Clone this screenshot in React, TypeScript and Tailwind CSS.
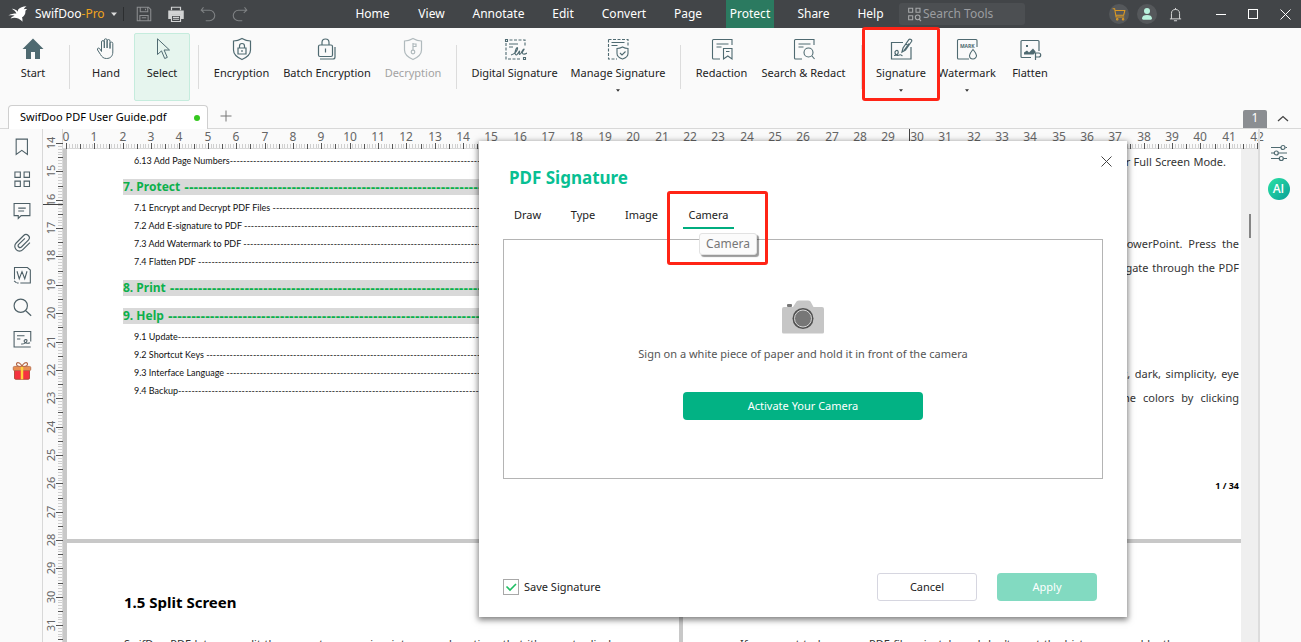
import type { ReactNode } from "react";

const CM = 28.36;

function Icon({ size = 24, className = "", sw = 1, children }: { size?: number; className?: string; sw?: number; children: ReactNode }) {
  return (
    <svg width={size} height={size} viewBox="0 0 24 24" fill="none" stroke="currentColor" strokeWidth={sw} className={"shrink-0 " + className} aria-hidden="true">
      {children}
    </svg>
  );
}

/* ---------- title bar ---------- */

const menus = [
  { name: "Home", w: "w-[43px]" },
  { name: "View", w: "w-[35px]" },
  { name: "Annotate", w: "w-[59px]" },
  { name: "Edit", w: "w-[30px]" },
  { name: "Convert", w: "w-[52px]" },
  { name: "Page", w: "w-[36px]" },
  { name: "Protect", w: "w-[48px]", active: true },
  { name: "Share", w: "w-[39px]" },
  { name: "Help", w: "w-[35px]" },
];

function TitleBar() {
  return (
    <header className="flex h-7 shrink-0 items-center bg-[#424548] text-white">
      <div className="flex w-[351px] shrink-0 items-center pl-2">
        <svg width="20" height="16" viewBox="0 0 20 16" fill="#fff" aria-hidden="true">
          <path d="M18.5 0.3C15 0.6 11.6 1.6 10.2 3.6C9.8 4.3 9.8 5 10.1 5.8C8.4 4 6.6 3 3.8 2.8C6 4 7.6 5.4 8.4 7.4C5.6 7.4 2.6 7.8 0.4 9.6C2.6 9.2 4.8 9.2 6.6 9.8C5 10.4 3.4 11.2 2.6 12.4C5.2 11.4 8 11.6 10.2 12.4C12 13.2 13.4 14.2 14.4 15.8C14.6 14 14.6 12.6 14 11.4C16.4 10 17.6 8 17.4 5.6C17.4 4.4 17.8 3.8 19.2 3.4C18 3 16.8 3 15.8 3.4C16.2 2.2 17 1.2 18.5 0.3Z" />
        </svg>
        <button className="ml-[7px] flex items-center whitespace-nowrap text-[12px] leading-4">
          SwifDoo<span className="text-[#efa31d]">-Pro</span>
          <svg width="6" height="4" viewBox="0 0 6 4" className="ml-1.5" aria-hidden="true">
            <path d="M0 0.5h6L3 4z" fill="#ddd" />
          </svg>
        </button>
        <div className="ml-1.5 h-3.5 w-px bg-[#2c2e30]" />
        <button aria-label="Save" className="ml-[11px] text-[#8d8f91]">
          <Icon size={18} sw={1.4}><path d="M3 3h15l3 3v15H3zM7 3v6h10V3M14 5v2M6.500 21v-7h11v7M9 17h6" /></Icon>
        </button>
        <button aria-label="Print" className="ml-3.5 text-[#d2d3d4]">
          <Icon size={18} sw={1.6}>
            <path d="M6 7V3h12v4" />
            <path d="M2.500 8h19v10h-3v-5h-13v5h-3z" fill="currentColor" />
            <path d="M6 14h12v8H6zM8 16.500h8M8 19h8" />
          </Icon>
        </button>
        <button aria-label="Undo" className="ml-3.5 text-[#7e8183]">
          <Icon size={18} sw={1.5}><path d="M6 3L3 7l4 3.500M3.500 7H14a7 7 0 0 1 0 14H9" /></Icon>
        </button>
        <button aria-label="Redo" className="ml-3.5 text-[#7e8183]">
          <Icon size={18} sw={1.5}><path d="M18 3l3 4-4 3.500M20.500 7H10a7 7 0 0 0 0 14h5" /></Icon>
        </button>
      </div>
      <nav className="flex h-full shrink-0 gap-5">
        {menus.map((m) => (
          <button key={m.name} className={"flex h-full items-center justify-center whitespace-nowrap text-[12px] " + m.w + (m.active ? " bg-[#2b7a60]" : "")}>
            {m.name}
          </button>
        ))}
      </nav>
      <label className="ml-[11px] flex h-[22px] w-[126px] shrink-0 items-center rounded-[3px] bg-[#4c4f52] pl-2 text-[#a7a9ab]">
        <Icon size={16} sw={1.6}>
          <path d="M2.500 3.500h6v6h-6zM13.500 3.500h6v6h-6zM2.500 14.500h6v6h-6zM18 19.500l3 3" />
          <circle cx="16" cy="17" r="3.500" />
        </Icon>
        <input aria-label="Search Tools" placeholder="Search Tools" className="w-[94px] bg-transparent text-[12px] leading-4 outline-none placeholder:text-[#9b9da0]" />
      </label>
      <div className="ml-auto flex items-center pr-1.5">
        <button aria-label="Cart" className="flex size-5 items-center justify-center rounded-full bg-[#55585b] text-[#dd9a24]">
          <Icon size={14} sw={1.8}><path d="M1 3h3.500l2.500 14h14M5 6h17l-2 8H7" /><circle cx="9" cy="21" r="1.300" /><circle cx="19" cy="21" r="1.300" /></Icon>
        </button>
        <button aria-label="Account" className="ml-2 flex size-5 items-center justify-center rounded-full bg-[#55585b]">
          <svg width="12" height="14" viewBox="0 0 12 14" fill="#b9f2dd" aria-hidden="true">
            <circle cx="6" cy="4" r="3" />
            <path d="M1 11.500C1 9 3 8 6 8s5 1 5 3.500c0 1-1 1.200-2 1.200H3c-1 0-2-.2-2-1.200z" />
          </svg>
        </button>
        <button aria-label="Notifications" className="ml-2 flex size-5 items-center justify-center text-[#d4d5d6]">
          <Icon size={15} sw={1.6}><path d="M3 19h18M5.500 19v-8.500a6.500 6.500 0 0 1 13 0V19M12 4V1.500M9.500 22h5" /></Icon>
        </button>
        <button aria-label="Minimize" className="ml-[26px] flex size-5 items-center justify-center"><span className="h-px w-2.5 bg-white" /></button>
        <button aria-label="Maximize" className="ml-3 flex size-5 items-center justify-center"><span className="size-2.5 border border-white" /></button>
        <button aria-label="Close" className="ml-3 flex size-5 items-center justify-center">
          <svg width="11" height="11" viewBox="0 0 11 11" stroke="#fff" aria-hidden="true"><path d="M.5.5l10 10M10.500.5l-10 10" /></svg>
        </button>
      </div>
    </header>
  );
}

/* ---------- ribbon ---------- */

type ToolProps = { label: string; w: string; children: ReactNode; active?: boolean; disabled?: boolean; caret?: boolean; marked?: boolean };

function Tool({ label, w, children, active, disabled, caret, marked }: ToolProps) {
  return (
    <button
      disabled={disabled}
      className={
        "relative flex h-[68px] shrink-0 flex-col items-center rounded-[2px] " + w +
        (active ? " border border-[#c5ecdd] bg-[#e6f5ee] pt-[3px]" : " pt-1")
      }
    >
      <span className={"block h-6 " + (disabled ? "text-[#b0babd]" : "text-[#4f6a71]")}>{children}</span>
      <span className={"mt-1 whitespace-nowrap text-[11px] leading-4 " + (disabled ? "text-[#a3a3a3]" : "text-[#222]")}>{label}</span>
      {caret && (
        <svg width="4" height="3" viewBox="0 0 4 3" className="mt-2" aria-hidden="true"><path d="M0 .3h4L2 2.800z" fill="#333" /></svg>
      )}
      {marked && <span className="absolute -top-1.5 -left-2 z-10 h-[74px] w-[78px] rounded-[3px] border-3 border-[#ff2416]" />}
    </button>
  );
}

const Sep = () => <div className="mx-2 mt-3 h-11 w-px shrink-0 bg-[#dcdcdc]" />;

const shield = "M12 1.500c2.500 1.500 5.500 2.500 8.500 2.500v9c0 4.500-4 7.500-8.500 9.500-4.500-2-8.500-5-8.500-9.500V4c3 0 6-1 8.500-2.500z";

function Ribbon() {
  return (
    <div className="flex h-[73px] shrink-0 items-start pt-[5px] pl-[5px]">
      <Tool label="Start" w="w-14"><Icon><path d="M12 1.500L1.500 12H5v10h5v-7h4v7h5V12h3.500z" fill="currentColor" stroke="none" /></Icon></Tool>
      <Sep />
      <Tool label="Hand" w="w-14">
        <Icon><path d="M7.500 14.500V5a1.400 1.400 0 0 1 2.800 0v6V3.200a1.400 1.400 0 0 1 2.800 0V11V4a1.400 1.400 0 0 1 2.900 0v7.500V6.500a1.400 1.400 0 0 1 2.800 0V15c0 4-2.300 6.500-6.300 6.500-3 0-4.500-1.500-6-4L3.600 13c-.8-1.500.8-2.600 2-1.500z" /></Icon>
      </Tool>
      <Tool label="Select" w="w-14" active>
        <Icon><path d="M7.500 1.800v15.700l4-3.600 3.200 7.600 2.600-1.100-3.200-7.400h5.400z" /></Icon>
      </Tool>
      <Sep />
      <Tool label="Encryption" w="w-[69px]">
        <Icon sw={1.2}><path d={shield} /><path d="M8 11h8v6H8zM9.500 11V9a2.500 2.500 0 0 1 5 0v2M12 13v2" /></Icon>
      </Tool>
      <Tool label="Batch Encryption" w="w-[102px]">
        <Icon sw={1.2}><rect x="3.500" y="8" width="14" height="11.500" rx="1.500" /><path d="M7 8V5.500a3.500 3.500 0 0 1 7 0V8M10.500 11.500v4M5 22h13a2 2 0 0 0 2-2V10" /></Icon>
      </Tool>
      <Tool label="Decryption" w="w-[70px]" disabled>
        <Icon sw={1.2}><path d={shield} /><circle cx="12" cy="15" r="1.800" /><path d="M12 13V6M12 7h3v2.500h-3" /></Icon>
      </Tool>
      <Sep />
      <Tool label="Digital Signature" w="w-[99px]">
        <Icon sw={1.1}>
          <path d="M2.500 2.500h2v2h-2zM20.500 20.500h2v2h-2z" />
          <path d="M6.500 3H22v6M3 6v16h15.500" strokeDasharray="3 1.500" />
          <path d="M6 7h9M6 10h4M8 18c4-1 7-5 6.500-7s-3.500 4.500-2 6.500 3.500-3.500 4-3.500-1 3.500 .3 3.500 2.700-5.500 4-5.500-1.800 2.500-1.500 4 2.700 1.500 4.700 0" />
        </Icon>
      </Tool>
      <Tool label="Manage Signature" w="w-[108px]" caret>
        <Icon sw={1.1}>
          <path d="M2.500 2.500H22v6M2.500 2.500V22H11" strokeDasharray="3 1.500" />
          <path d="M5.500 5.500h13M5.500 8.500h6" />
          <path d="M16.500 10c1.800 1 3.500 1.500 5.500 1.500v5c0 2.500-2.500 4.500-5.500 5.500-3-1-5.500-3-5.500-5.500v-5c2 0 3.700-.5 5.500-1.500zM14 16l2 2 3.500-3.500" />
        </Icon>
      </Tool>
      <Sep />
      <Tool label="Redaction" w="w-[65px]">
        <Icon sw={1.1}><path d="M10 22H3.500a1 1 0 0 1-1-1V3.500a1 1 0 0 1 1-1H22V8M6.500 7h12M6.500 10h5M13.500 11.500H22v10.500l-4.200-3-4.300 3zM16 14.500h3.500" /></Icon>
      </Tool>
      <Tool label="Search & Redact" w="w-[99px]">
        <Icon sw={1.1}><path d="M10 22H3.500a1 1 0 0 1-1-1V3.500a1 1 0 0 1 1-1H22V8M6.500 7h12M6.500 10h5" /><circle cx="16.500" cy="15.500" r="4.500" /><path d="M20 19l2.500 3" /></Icon>
      </Tool>
      <Sep />
      <Tool label="Signature" w="w-[62px]" caret marked>
        <Icon sw={1.2}>
          <path d="M14 5.500H2.500V22H22V10M5 18.500c3 0 5-2 4-4.500-1-1.500-3.500 0-3 2s2.500 3 4.500 2 1.500 1 3 .5" />
          <path d="M13 15l1-4 6-8.500c1-1 3.500.5 2.500 2L16.500 13zM17 7l2.500 2M15 13.500l5-7" />
        </Icon>
      </Tool>
      <Tool label="Watermark" w="w-[70px]" caret>
        <Icon sw={1.1}>
          <path d="M14 22H3.500a1 1 0 0 1-1-1V3.500a1 1 0 0 1 1-1H21a1 1 0 0 1 1 1V10M18 12.500c2 2.500 3.500 4 3.500 6a3.500 3.500 0 0 1-7 0c0-2 1.500-3.500 3.500-6z" />
          <text x="12.300" y="11" textAnchor="middle" fontSize="5" fontWeight="bold" fill="currentColor" stroke="none">MARK</text>
        </Icon>
      </Tool>
      <Tool label="Flatten" w="w-14">
        <Icon sw={1.2}>
          <path d="M13 20.500H4a1 1 0 0 1-1-1V4.500a1 1 0 0 1 1-1h16a1 1 0 0 1 1 1V14M17.500 23v-7h3.200a2 2 0 0 1 0 4h-3" />
          <path d="M6 17.500v-2l3-2 2 2 4-4 2.500 3v1l-2 2z" fill="currentColor" stroke="none" />
          <rect x="8" y="8" width="2" height="2" fill="currentColor" stroke="none" />
        </Icon>
      </Tool>
    </div>
  );
}

function TabStrip() {
  return (
    <div className="flex h-7 shrink-0 items-end border-b border-[#d8d8d8] pl-2">
      <div className="-mb-px flex h-6 w-[200px] items-center justify-between rounded-t-[4px] border border-b-0 border-[#cfcfcf] bg-white pr-[7px] pl-[11px]">
        <a href="#doc" className="whitespace-nowrap text-[11px] text-black">SwifDoo PDF User Guide.pdf</a>
        <span className="size-1.5 rounded-full bg-[#35c81f]" />
      </div>
      <button aria-label="New tab" className="mb-1.5 ml-3 text-[#777]">
        <svg width="12" height="12" viewBox="0 0 12 12" stroke="currentColor" aria-hidden="true"><path d="M6 .5v11M.5 6h11" /></svg>
      </button>
      <span className="ml-auto h-[18px] w-6 rounded-t-[2px] bg-[#8b8e92] text-center text-[12px] leading-4 text-white">1</span>
      <button aria-label="Collapse ribbon" className="mr-3 mb-1.5 ml-2.5 text-[#444]">
        <svg width="12" height="7" viewBox="0 0 12 7" fill="none" stroke="currentColor" strokeWidth="1.300" aria-hidden="true"><path d="M1 6l5-4.500L11 6" /></svg>
      </button>
    </div>
  );
}

/* ---------- side rails ---------- */

function LeftRail() {
  return (
    <aside className="flex w-[43px] shrink-0 flex-col items-center gap-3 border-r border-[#d8d8d8] pt-2 pl-0.5 text-[#4d5f66]">
      <button aria-label="Bookmarks" className="size-5"><Icon size={20} sw={1.3}><path d="M5 2.500h13.500V21l-6.700-5L5 21z" /></Icon></button>
      <button aria-label="Thumbnails" className="size-5"><Icon size={20} sw={1.3}><path d="M3.500 3.500h6.500v6.500H3.500zM14.500 3.500H21v6.500h-6.500zM3.500 14.500h6.500V21H3.500zM14.500 14.500H21V21h-6.500z" /></Icon></button>
      <button aria-label="Comments" className="size-5"><Icon size={20} sw={1.3}><path d="M2.500 3h19v14.500H11L7.500 21v-3.500h-5zM7.500 8.500h9M7.500 12h7" /></Icon></button>
      <button aria-label="Attachments" className="size-5"><Icon size={20} sw={1.4}><path d="M20.500 11.500l-8.500 8.500a5.500 5.500 0 0 1-8-8l9-9a3.900 3.900 0 0 1 5.600 5.500l-8.300 8.300a2.300 2.300 0 0 1-3.300-3.200L14.500 6.500" transform="translate(1 0)" /></Icon></button>
      <button aria-label="Convert to Word" className="size-5"><Icon size={20} sw={1.3}><path d="M8 21.500H6M3 17V3h15.500L22 6v15.500H10M6 7.500L8.700 16.500 12 8l3.300 8.500L18 7.500M2.500 19l3 2.500" /></Icon></button>
      <button aria-label="Search" className="size-5"><Icon size={20} sw={1.4}><circle cx="10.500" cy="10.500" r="8" /><path d="M16.500 16.500L23 22.500" /></Icon></button>
      <button aria-label="Signatures" className="size-5"><Icon size={20} sw={1.3}><path d="M22.500 15V3h-20v18.500h20M6 8h9M6 12h4M11 18c3 .5 7-2 7-4s-3.500-1.500-3.500.5 4 3.500 7 2" /></Icon></button>
      <button aria-label="Gift" className="size-5">
        <svg width="20" height="20" viewBox="0 0 24 24" aria-hidden="true">
          <rect x="3" y="9" width="18" height="13" rx="1.500" fill="#f5333f" stroke="#a8452a" />
          <path d="M12 7C8 7 4.500 5.500 5.500 3S11 2.500 12 7c1-4.500 5.500-6.500 6.500-4S16 7 12 7z" fill="#fff" stroke="#b5694a" strokeWidth="1.500" />
          <rect x="1.500" y="6.500" width="21" height="5" rx="1.500" fill="#e98f51" stroke="#b5694a" />
          <path d="M12 7v15" stroke="#ffd23c" strokeWidth="3" />
        </svg>
      </button>
    </aside>
  );
}

function RightRail() {
  return (
    <aside className="flex w-[43px] shrink-0 flex-col items-center border-l-2 border-[#dcdcdc] pt-[15px] pr-1">
      <button aria-label="Properties" className="text-[#4f6a71]">
        <svg width="18" height="18" viewBox="0 0 18 18" fill="none" stroke="currentColor" strokeWidth="1.200" aria-hidden="true">
          <path d="M1 3.500h10M15.500 3.500H17M1 9h3M8.500 9H17M1 14.500h8M13.500 14.500H17" />
          <circle cx="13" cy="3.500" r="2" /><circle cx="6.300" cy="9" r="2" /><circle cx="11.300" cy="14.500" r="2" />
        </svg>
      </button>
      <button className="mt-4 flex size-[22px] items-center justify-center rounded-full bg-linear-to-br from-[#2be3a4] to-[#0a9f97] font-['Open_Sans',sans-serif] text-[12px] font-semibold text-white">AI</button>
    </aside>
  );
}

/* ---------- rulers ---------- */

function ticks(from: number, to: number) {
  const out: { pos: number; kind: number }[] = [];
  for (let i = from * 10; i <= to * 10; i++) out.push({ pos: i, kind: i % 10 === 0 ? 2 : i % 5 === 0 ? 1 : 0 });
  return out;
}

function HorizontalRuler() {
  return (
    <svg className="block h-5 w-full overflow-visible text-[12px]" aria-label="Horizontal ruler">
      <path d="M0 19.500H1195" stroke="#d8d8d8" />
      {ticks(0, 42).map(({ pos, kind }) => {
        const x = Math.round(3 + (pos * CM) / 10) + 0.5;
        return <path key={pos} d={`M${x} ${kind === 2 ? 14 : 15}V${kind ? 20 : 19}`} stroke={kind ? "#555" : "#cfcfcf"} />;
      })}
      {Array.from({ length: 43 }, (_, n) => (
        <text key={n} x={Math.round(3 + n * CM)} y="12" textAnchor="middle" fill="#666">{n}</text>
      ))}
      <path d="M846.500 0V12" stroke="#444" />
    </svg>
  );
}

function VerticalRuler() {
  return (
    <svg className="block h-full w-5 shrink-0 text-[11px]" aria-label="Vertical ruler">
      <path d="M19.500 0V4000" stroke="#d8d8d8" />
      {ticks(14, 32).map(({ pos, kind }) => {
        const y = Math.round(14 + ((pos - 140) * CM) / 10) + 0.5;
        return <path key={pos} d={`M${kind === 2 ? 13 : 15} ${y}H${kind ? 20 : 19}`} stroke={kind ? "#555" : "#cfcfcf"} />;
      })}
      {Array.from({ length: 18 }, (_, i) => {
        const y = Math.round(14 + i * CM);
        return <text key={i} x="12" y={y} textAnchor="middle" fill="#666" transform={`rotate(-90 12 ${y})`}>{14 + i}</text>;
      })}
      <path d="M0 75.500H20" stroke="#444" />
    </svg>
  );
}

/* ---------- document ---------- */

const headingLeader = "-".repeat(84);
const itemLeader = "-".repeat(116);

const TocHeading = ({ children, gap }: { children: string; gap: string }) => (
  <div className={"flex h-4 items-center overflow-hidden bg-[#d9d9d9] text-[12px] leading-4 font-bold whitespace-pre text-[#0cb04c] " + gap}>
    {children}<span className="ml-1 font-['Liberation_Sans',sans-serif] text-[14px]">{headingLeader}</span>
  </div>
);

const TocItem = ({ children }: { children: string }) => (
  <div className="ml-[11px] flex h-[18px] items-center overflow-hidden font-[Lato,sans-serif] text-[9px] whitespace-pre text-[#111]">
    {children}<span>{itemLeader}</span>
  </div>
);

const Line = ({ children, w }: { children: string; w: string }) => (
  <p className={"ml-auto h-6 leading-6 whitespace-nowrap [text-align-last:justify] " + w}>{children}</p>
);

function Document() {
  return (
    <main id="doc" className="flex min-h-0 flex-1 flex-col gap-1 overflow-hidden bg-[#c8c8c8] pl-1">
      <div className="flex h-[390px] shrink-0 gap-1">
        <section className="w-[612px] shrink-0 overflow-hidden bg-white pt-[3px] pl-14">
          <TocItem>6.13 Add Page Numbers</TocItem>
          <TocHeading gap="mt-[9px]">7. Protect</TocHeading>
          <div className="mt-1">
            <TocItem>7.1 Encrypt and Decrypt PDF Files </TocItem>
            <TocItem>7.2 Add E-signature to PDF </TocItem>
            <TocItem>7.3 Add Watermark to PDF </TocItem>
            <TocItem>7.4 Flatten PDF </TocItem>
          </div>
          <TocHeading gap="mt-[9px]">8. Print</TocHeading>
          <TocHeading gap="mt-3">9. Help</TocHeading>
          <div className="mt-1">
            <TocItem>9.1 Update</TocItem>
            <TocItem>9.2 Shortcut Keys </TocItem>
            <TocItem>9.3 Interface Language </TocItem>
            <TocItem>9.4 Backup</TocItem>
          </div>
        </section>
        <section className="flex-1 bg-white pr-[2px] text-[11px] text-[#333]">
          <div className="mt-px pr-[13px]"><Line w="w-[107px]">or Full Screen Mode.</Line></div>
          <div className="mt-[58px]">
            <Line w="w-[119px]">PowerPoint. Press the</Line>
            <Line w="w-[135px]">navigate through the PDF</Line>
          </div>
          <div className="mt-[82px]">
            <Line w="w-[135px]">light, dark, simplicity, eye</Line>
            <Line w="w-[120px]">the colors by clicking</Line>
          </div>
          <p className="mt-[68px] text-right text-[9px] leading-4 font-bold text-black">1 / 34</p>
        </section>
      </div>
      <div className="flex min-h-0 flex-1 gap-1 text-[11px] text-[#333]">
        <section className="w-[612px] shrink-0 bg-white pt-[49px] pr-14 pl-[57px]">
          <h2 className="text-[15px] leading-5 font-bold text-black">1.5 Split Screen</h2>
          <p className="mt-[22px] leading-5 whitespace-nowrap [text-align-last:justify]">SwifDoo PDF lets you split the current screen view into several portions that it's easy to display</p>
        </section>
        <section className="flex-1 bg-white pt-[91px] pl-[57px]">
          <p className="w-[440px] leading-5 whitespace-nowrap [text-align-last:justify]">If you want to browse a PDF file privately and don't want the history opened by the</p>
        </section>
      </div>
    </main>
  );
}

/* ---------- signature dialog ---------- */

const sources = [
  { name: "Draw", w: "w-[37px]" },
  { name: "Type", w: "w-[34px]" },
  { name: "Image", w: "w-[43px]" },
  { name: "Camera", w: "w-[51px]", active: true },
];

function SignatureDialog() {
  return (
    <div role="dialog" aria-label="PDF Signature" className="absolute top-[141px] left-[479px] z-20 w-[648px] bg-white px-6 pt-[25px] pb-4 shadow-[0_2px_6px_1px_rgba(0,0,0,0.5)]">
      <button aria-label="Close dialog" className="absolute top-[15px] right-[15px] text-[#444]">
        <svg width="11" height="11" viewBox="0 0 11 11" stroke="currentColor" aria-hidden="true"><path d="M.5.5l10 10M10.500.5l-10 10" /></svg>
      </button>
      <h1 className="pl-1.5 text-[17px] leading-6 font-bold text-[#08bf93]">PDF Signature</h1>
      <div role="tablist" className="mt-3.5 flex h-[25px] gap-5 pl-1.5">
        {sources.map((s) => (
          <button
            key={s.name}
            role="tab"
            aria-selected={!!s.active}
            className={"relative flex items-center justify-center border-b-2 text-[11px] text-[#222] " + s.w + (s.active ? " border-[#00ad7f]" : " border-transparent")}
          >
            {s.name}
            {s.active && (
              <>
                <span role="tooltip" className="absolute top-[29px] left-4 flex h-[22px] w-[58px] items-center justify-center rounded-[3px] border border-[#e2e2e2] bg-[#fbfbfb] text-[12px] text-[#777] shadow-[2px_2px_1px_rgba(0,0,0,0.4)]">Camera</span>
                <span className="absolute -top-[13px] -left-4 h-[74px] w-[101px] rounded-[3px] border-3 border-[#ff2416]" />
              </>
            )}
          </button>
        ))}
      </div>
      <div className="mt-2.5 flex h-60 flex-col items-center border border-[#b4b4b4] pt-[60px]">
        <svg width="42" height="34" viewBox="0 0 42 34" aria-hidden="true">
          <path d="M2 7h9l3.500-5.500Q15.500.5 17 .5h9q1.500 0 2.500 1L31.500 7H40a2 2 0 0 1 2 2v23a1.500 1.500 0 0 1-1.500 1.500h-39A1.500 1.500 0 0 1 0 32V9a2 2 0 0 1 2-2z" fill="#c6c6c6" />
          <rect x="5" y="4" width="5" height="3" rx="1" fill="#777" />
          <circle cx="21" cy="18.500" r="10.500" fill="#505050" />
          <circle cx="21" cy="18.500" r="8.500" fill="#777" stroke="#d8d8d8" />
        </svg>
        <p className="mt-3 text-[11px] leading-4 text-[#555]">Sign on a white piece of paper and hold it in front of the camera</p>
        <button className="mt-[30px] h-7 w-60 rounded-[4px] bg-[#02b284] text-[11px] text-white">Activate Your Camera</button>
      </div>
      <div className="mt-[94px] flex h-7 items-center pr-1.5">
        <label className="flex items-center gap-[5px] text-[11px] text-[#222]">
          <span className="relative flex size-4">
            <input type="checkbox" defaultChecked className="peer size-4 appearance-none border border-[#a8a8a8] bg-white" />
            <svg viewBox="0 0 16 16" className="pointer-events-none absolute inset-0 hidden size-4 peer-checked:block" fill="none" stroke="#1fbe63" strokeWidth="1.600" aria-hidden="true"><path d="M3.500 7.500l3.500 3.500 6-6" /></svg>
          </span>
          Save Signature
        </label>
        <button className="ml-auto h-7 w-[100px] rounded-[3px] border border-[#d6d6e0] bg-white text-[11px] text-[#222]">Cancel</button>
        <button className="ml-5 h-7 w-[100px] rounded-[4px] bg-[#82dac1] text-[11px] text-white">Apply</button>
      </div>
    </div>
  );
}

export default function App() {
  return (
    <div className="relative flex h-screen flex-col overflow-hidden bg-[#fafafa] font-['Noto_Sans',sans-serif]">
      <TitleBar />
      <Ribbon />
      <TabStrip />
      <div className="flex min-h-0 flex-1">
        <LeftRail />
        <VerticalRuler />
        <div className="flex min-w-0 flex-1 flex-col">
          <HorizontalRuler />
          <div className="flex min-h-0 flex-1">
            <Document />
            <div className="w-[17px] shrink-0 bg-[#efefef] pt-[65px] pl-2"><div className="h-6 w-0.5 bg-[#858585]" /></div>
          </div>
        </div>
        <RightRail />
      </div>
      <SignatureDialog />
    </div>
  );
}
